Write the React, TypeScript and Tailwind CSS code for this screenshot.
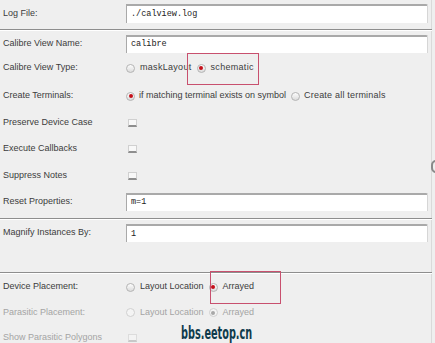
import type { ReactNode } from "react";

const label = "pl-[3px] w-[126px] shrink-0 text-[9px]";

const Radio = ({ on = false, disabled = false }: { on?: boolean; disabled?: boolean }) => (
  <span
    className={`inline-flex items-center justify-center w-[9px] h-[9px] rounded-full border shrink-0 ${
      disabled ? "border-[#d0d0d0] bg-[#f4f4f4]" : "border-[#b4b4b4] bg-gradient-to-b from-[#fdfdfd] to-[#dcdcdc]"
    }`}
  >
    {on && <span className={`w-[4px] h-[4px] rounded-full ${disabled ? "bg-[#a8a8a8]" : "bg-[#c4101a]"}`} />}
  </span>
);

const Check = ({ disabled = false }: { disabled?: boolean }) => (
  <span
    className={`ml-[2px] inline-block w-[9px] h-[8px] border border-b-2 ${
      disabled ? "border-[#dcdcdc] border-b-[#c8c8c8] bg-[#f3f3f3]" : "border-[#d0d0d0] border-b-[#8e8e8e] bg-[#f8f8f8]"
    }`}
  />
);

const Field = ({ value, h = "h-[18px]" }: { value: string; h?: string }) => (
  <div
    className={`w-[302px] ${h} flex items-center pl-[4px] bg-white border-t-2 border-l border-[#a9a9a9] border-r border-r-[#d6d6d6] border-b-0 rounded-tr-[2px] text-[8.5px] text-[#222] font-['Liberation_Mono',monospace]`}
  >
    {value}
  </div>
);

const Row = ({ h, className = "", children }: { h: string; className?: string; children: ReactNode }) => (
  <div className={`flex items-center shrink-0 ${h} ${className}`}>{children}</div>
);

const Sep = ({ mt }: { mt: string }) => (
  <div className={`${mt} shrink-0 w-[432px] h-[2px] border-t border-[#8e8e8e] border-b border-b-white`} />
);

export default function App() {
  return (
    <div className="relative w-[435px] h-[343px] overflow-hidden bg-[#efefef] text-[#3c3c3c] font-['Liberation_Sans',Arial,sans-serif]">
      <div className="flex flex-col w-[432px] border-r border-[#dadada] h-full">
        <Row h="h-[27px]">
          <span className={label}>Log File:</span>
          <Field value="./calview.log" h="h-[19px]" />
        </Row>
        <Sep mt="mt-[2px]" />
        <Row h="h-[25px]">
          <span className={label}>Calibre View Name:</span>
          <Field value="calibre" />
        </Row>
        <Row h="h-[24px]">
          <span className={label}>Calibre View Type:</span>
          <div className="flex items-center gap-[5px] text-[9px] tracking-[0.3px]">
            <Radio />
            <span>maskLayout</span>
            <Radio on />
            <span>schematic</span>
          </div>
        </Row>
        <Row h="h-[32px]">
          <span className={label}>Create Terminals:</span>
          <div className="flex items-center gap-[4px] text-[9px]">
            <Radio on />
            <span>if matching terminal exists on symbol</span>
            <span className="ml-[1px] flex items-center">
              <Radio />
            </span>
            <span className="tracking-[0.2px]">Create all terminals</span>
          </div>
        </Row>
        <Row h="h-[22px]">
          <span className={label}>Preserve Device Case</span>
          <Check />
        </Row>
        <Row h="h-[30px]">
          <span className={label}>Execute Callbacks</span>
          <Check />
        </Row>
        <Row h="h-[24px]">
          <span className={label}>Suppress Notes</span>
          <Check />
        </Row>
        <Row h="h-[27px]">
          <span className={label}>Reset Properties:</span>
          <Field value="m=1" />
        </Row>
        <Sep mt="mt-[3px]" />
        <Row h="h-[26px]">
          <span className={label}>Magnify Instances By:</span>
          <Field value="1" />
        </Row>
        <Sep mt="mt-[26px]" />
        <Row h="h-[26px]">
          <span className={label}>Device Placement:</span>
          <div className="flex items-center gap-[5px] text-[9px]">
            <Radio />
            <span>Layout Location</span>
            <Radio on />
            <span>Arrayed</span>
          </div>
        </Row>
        <Row h="h-[25px]" className="text-[#a4a4a4]">
          <span className={label}>Parasitic Placement:</span>
          <div className="flex items-center gap-[5px] text-[9px]">
            <Radio disabled />
            <span>Layout Location</span>
            <Radio on disabled />
            <span>Arrayed</span>
          </div>
        </Row>
        <Row h="h-[26px]" className="text-[#a4a4a4]">
          <span className={label}>Show Parasitic Polygons</span>
          <Check disabled />
        </Row>
      </div>

      {/* scroll handle peeking at the right edge */}
      <div className="absolute left-[431px] top-[160px] w-[10px] h-[13px] rounded-full border-2 border-[#8a8a8a]" />

      {/* annotation boxes */}
      <div className="absolute left-[187px] top-[53px] w-[72px] h-[32px] border border-[#c8506e]" />
      <div className="absolute left-[210px] top-[271px] w-[71px] h-[33px] border border-[#c8506e]" />

      {/* watermark */}
      <div className="absolute left-[181px] top-[324px] text-[18px] leading-none font-bold text-[#0f3b4c] scale-x-[0.6] origin-left font-['DejaVu_Sans_Condensed','DejaVu_Sans',sans-serif]">
        bbs.eetop.cn
      </div>
    </div>
  );
}
